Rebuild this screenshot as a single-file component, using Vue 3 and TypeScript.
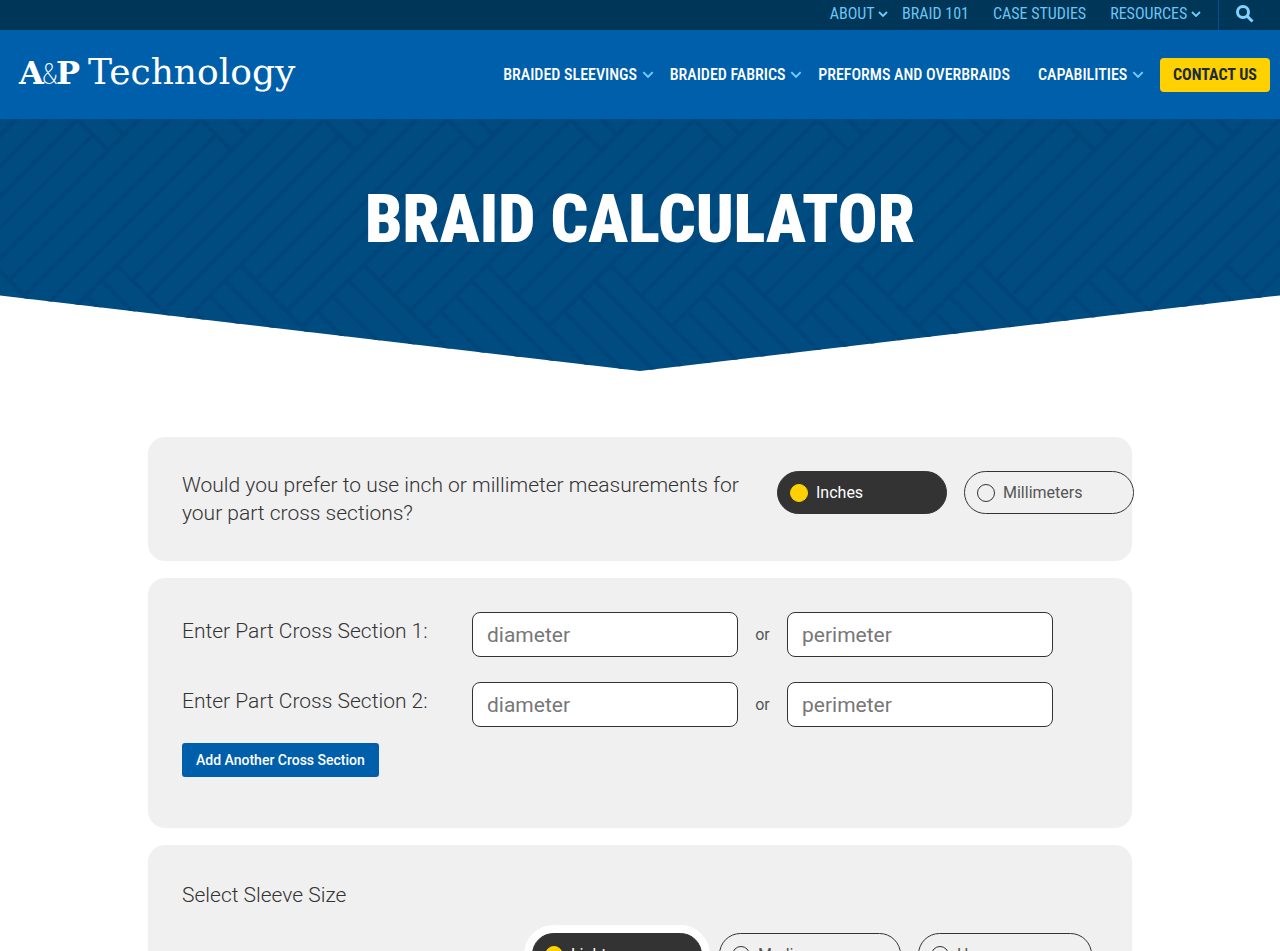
<script setup lang="ts">
import { ref } from 'vue'

interface NavItem {
  label: string
  menu: boolean
}

interface Segment {
  x1: number
  y1: number
  x2: number
  y2: number
}

const topLinks: NavItem[] = [
  { label: 'ABOUT', menu: true },
  { label: 'BRAID 101', menu: false },
  { label: 'CASE STUDIES', menu: false },
  { label: 'RESOURCES', menu: true },
]

const mainLinks: NavItem[] = [
  { label: 'BRAIDED SLEEVINGS', menu: true },
  { label: 'BRAIDED FABRICS', menu: true },
  { label: 'PREFORMS AND OVERBRAIDS', menu: false },
  { label: 'CAPABILITIES', menu: true },
]

const units = ref('inches')
const sleeve = ref('light')
const sections = ref([
  { diameter: '', perimeter: '' },
  { diameter: '', perimeter: '' },
])

function addSection() {
  sections.value.push({ diameter: '', perimeter: '' })
}

// Braid texture: groups of four diagonal strands, repeated across the banner.
// Each strand is described by s = x + y and d = x - y.
const PERIOD = 123.3
const STEP = PERIOD / 4

function segment(s1: number, d1: number, s2: number, d2: number): Segment {
  return {
    x1: (s1 + d1) / 2,
    y1: (s1 - d1) / 2,
    x2: (s2 + d2) / 2,
    y2: (s2 - d2) / 2,
  }
}

const strands: Segment[] = []
for (let k = 0; k < 4; k++) {
  const s = 263 + STEP * k
  strands.push(segment(s, k === 0 ? -29 - PERIOD : -29, s, 324))
  strands.push(segment(263, -29 - STEP * k, 617, -29 - STEP * k))
  strands.push(segment(139, 77 + STEP * k, -215, 77 + STEP * k))
}
const repeats = Array.from({ length: 26 }, (_, i) => (i - 4) * PERIOD)
</script>

<template>
  <div class="page">
    <header>
      <div class="topbar">
        <nav class="top-nav" aria-label="Secondary">
          <a v-for="item in topLinks" :key="item.label" href="#" :class="{ plain: !item.menu }">
            {{ item.label }}
            <svg v-if="item.menu" class="chevron" viewBox="0 0 10 6" aria-hidden="true">
              <path d="M1 1l4 4 4-4" />
            </svg>
          </a>
        </nav>
        <button class="search" type="button" aria-label="Search">
          <svg viewBox="0 0 18 18" aria-hidden="true">
            <circle cx="7" cy="7" r="5.5" />
            <path d="M11 11l5.5 5.5" />
          </svg>
        </button>
      </div>
      <div class="mainbar">
        <a class="logo" href="#"><b>A</b><span class="amp">&amp;</span><b>P</b><span class="word">Technology</span></a>
        <nav class="main-nav" aria-label="Main">
          <a v-for="item in mainLinks" :key="item.label" href="#" :class="{ plain: !item.menu }">
            {{ item.label }}
            <svg v-if="item.menu" class="chevron" viewBox="0 0 10 6" aria-hidden="true">
              <path d="M1 1l4 4 4-4" />
            </svg>
          </a>
          <a class="contact" href="#">CONTACT US</a>
        </nav>
      </div>
    </header>

    <section class="hero">
      <svg class="texture" aria-hidden="true">
        <g v-for="x in repeats" :key="x" :transform="`translate(${x} 0)`">
          <line v-for="(l, i) in strands" :key="i" :x1="l.x1" :y1="l.y1" :x2="l.x2" :y2="l.y2" />
        </g>
      </svg>
      <h1>BRAID CALCULATOR</h1>
    </section>

    <main>
      <fieldset class="card units">
        <legend class="question">Would you prefer to use inch or millimeter measurements for your part cross sections?</legend>
        <div class="pills">
          <label class="pill"><input v-model="units" type="radio" name="units" value="inches" /><span>Inches</span></label>
          <label class="pill"><input v-model="units" type="radio" name="units" value="mm" /><span>Millimeters</span></label>
        </div>
      </fieldset>

      <section class="card">
        <div v-for="(row, i) in sections" :key="i" class="row">
          <label class="question" :for="`diameter-${i}`">Enter Part Cross Section {{ i + 1 }}:</label>
          <input :id="`diameter-${i}`" v-model="row.diameter" type="text" placeholder="diameter" />
          <span class="or">or</span>
          <input v-model="row.perimeter" type="text" placeholder="perimeter" :aria-label="`Perimeter ${i + 1}`" />
        </div>
        <button class="add" type="button" @click="addSection">Add Another Cross Section</button>
      </section>

      <fieldset class="card sleeve">
        <legend class="question">Select Sleeve Size</legend>
        <div class="pills">
          <label class="pill focused"><input v-model="sleeve" type="radio" name="sleeve" value="light" /><span>Light</span></label>
          <label class="pill medium"><input v-model="sleeve" type="radio" name="sleeve" value="medium" /><span>Medium</span></label>
          <label class="pill heavy"><input v-model="sleeve" type="radio" name="sleeve" value="heavy" /><span>Heavy</span></label>
        </div>
      </fieldset>
    </main>
  </div>
</template>

<style>
body {
  margin: 0;
}
</style>

<style scoped>
.page {
  height: 100vh;
  overflow: hidden auto;
  scrollbar-width: none;
  background: #fff;
  color: #333;
  font-family: Roboto, "Liberation Sans", sans-serif;
}

.page *,
.page *::before {
  box-sizing: border-box;
}

a {
  color: inherit;
  text-decoration: none;
  white-space: nowrap;
}

.topbar {
  display: flex;
  justify-content: flex-end;
  height: 30px;
  background: #003658;
  color: #6bc5f5;
}

.top-nav,
.main-nav {
  display: flex;
  align-items: center;
  gap: 14px;
  font-family: "Roboto Condensed", "Liberation Sans Narrow", "Liberation Sans", sans-serif;
  font-size: 16px;
  line-height: 24px;
}

.top-nav {
  height: 28px;
  padding-right: 17px;
}

.main-nav {
  gap: 16px;
  padding-top: 4px;
  font-weight: 500;
}

.plain {
  margin-right: 10px;
}

.main-nav .plain {
  margin-right: 12px;
}

.chevron {
  width: 10px;
  height: 6px;
  margin-bottom: 2px;
  fill: none;
  stroke: #73cbf8;
  stroke-width: 1.8;
}

.main-nav .chevron {
  width: 12px;
  height: 7px;
  margin-left: 1px;
  stroke-width: 1.7;
}

.search {
  width: 62px;
  height: 30px;
  padding: 0 10px 0 0;
  border: 0;
  border-left: 1px solid #00508c;
  background: none;
}

.search svg {
  width: 18px;
  height: 18px;
  fill: none;
  stroke: #7fd3ff;
  stroke-width: 3;
}

.mainbar {
  display: flex;
  align-items: center;
  justify-content: space-between;
  height: 89px;
  padding: 0 10px 4px 19px;
  background: #005fab;
  color: #fff;
}

.logo {
  display: flex;
  align-items: baseline;
  font-family: "DejaVu Serif", serif;
  font-size: 36px;
  line-height: 40px;
}

.logo b {
  font-size: 32px;
}

.logo .amp {
  margin: 0 -2px;
  font-family: "Roboto Condensed", sans-serif;
  font-size: 30px;
  font-weight: 200;
}

.logo .word {
  margin-left: 8px;
}

.main-nav .contact {
  padding: 5px 13px;
  border-radius: 4px;
  background: #ffd100;
  color: #1c2b39;
  font-weight: bold;
}

.hero {
  position: relative;
  height: 252px;
  padding-top: 61px;
  background: #004b80;
  clip-path: polygon(0 0, 100% 0, 100% 70%, 50% 100%, 0 70%);
}

.texture {
  position: absolute;
  inset: 0;
  width: 100%;
  height: 100%;
  stroke: #00467b;
  stroke-width: 4;
}

h1 {
  position: relative;
  margin: 0;
  color: #fff;
  font-family: "Roboto Condensed", "Liberation Sans Narrow", "Liberation Sans", sans-serif;
  font-size: 66px;
  font-weight: 900;
  line-height: 80px;
  text-align: center;
}

main {
  display: flex;
  flex-direction: column;
  gap: 17px;
  max-width: 984px;
  margin: 66px auto 0;
}

.card {
  min-width: 0;
  margin: 0;
  padding: 34px;
  border: 0;
  border-radius: 17px;
  background: #f0f0f0;
}

.units {
  display: flex;
  gap: 34px;
  min-height: 123px;
}

.question {
  padding: 0;
  font-size: 21px;
  font-weight: 300;
  line-height: 28px;
}

.units .question {
  float: left;
  flex: none;
  width: 561px;
}

.pills {
  display: flex;
  gap: 17px;
}

.pill {
  display: flex;
  flex: none;
  align-items: center;
  gap: 8px;
  width: 170px;
  height: 43px;
  padding-left: 12px;
  border: 1px solid #333;
  border-radius: 22px;
  color: #555;
  font-size: 16px;
}

.pill input {
  appearance: none;
  width: 18px;
  height: 18px;
  margin: 0;
  border: 1px solid #333;
  border-radius: 50%;
}

.pill:has(input:checked) {
  background: #333;
  color: #fff;
}

.pill input:checked {
  border-color: #ffd100;
  background: #ffd100;
}

.row {
  display: flex;
  align-items: center;
  margin-bottom: 25px;
}

.row .question {
  width: 290px;
  padding-bottom: 8px;
}

.row input {
  width: 266px;
  height: 45px;
  padding: 0 14px;
  border: 1px solid #333;
  border-radius: 8px;
  background: #fff;
  color: #333;
  font-family: inherit;
  font-size: 21px;
}

.row input::placeholder {
  color: #777;
}

.or {
  width: 49px;
  color: #555;
  font-size: 16px;
  text-align: center;
}

.add {
  display: block;
  height: 34px;
  margin: -9px 0 17px;
  padding: 0 14px;
  border: 0;
  border-radius: 3px;
  background: #005fab;
  color: #fff;
  font-family: inherit;
  font-size: 14px;
  font-weight: 500;
}

.sleeve .question {
  float: left;
  padding-top: 2px;
}

.sleeve .pills {
  clear: both;
  padding: 24px 0 0 350px;
}

.pill.focused {
  box-shadow: 0 0 0 8px #fff;
}

.pill.medium {
  width: 182px;
}

.pill.heavy {
  width: 174px;
}
</style>
